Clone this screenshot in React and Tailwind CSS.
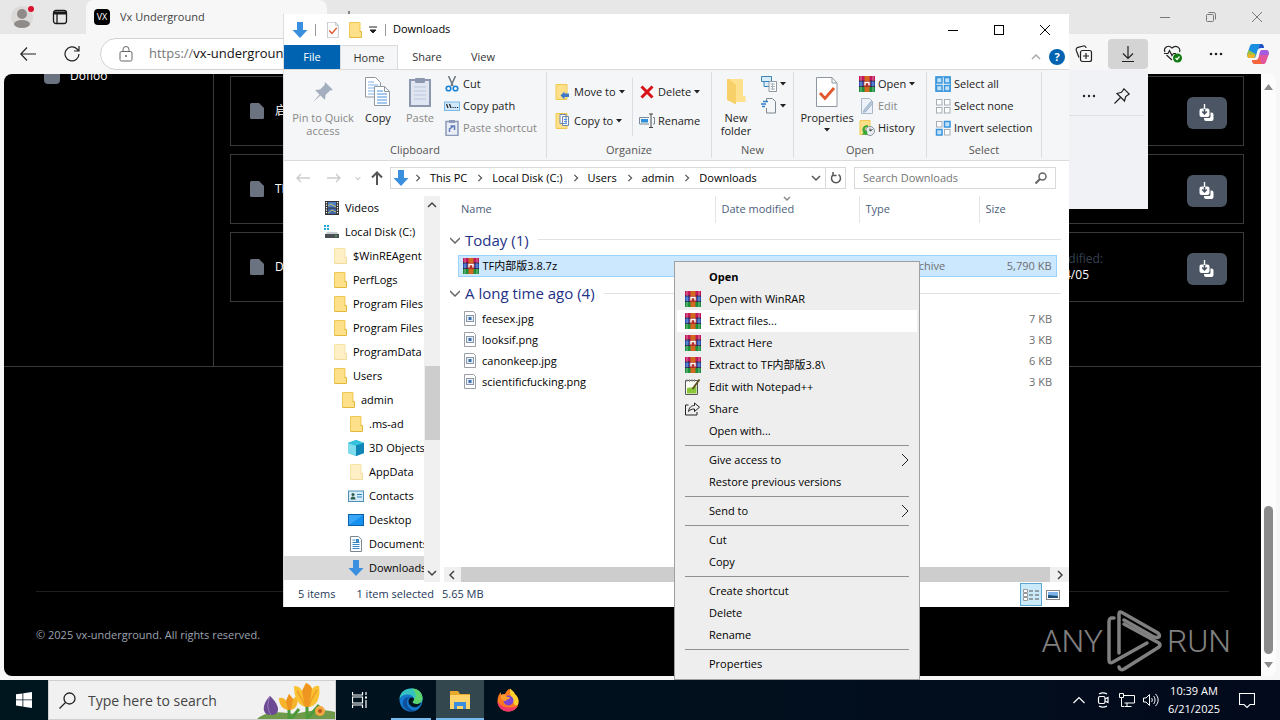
import React, { useState } from 'react';
import clsx from 'clsx';

/* ---------- small icons ---------- */

const WinRar = () => (
  <svg viewBox="0 0 16 16" className="size-4 shrink-0">
    <rect width="16" height="5" y="0" fill="#c2185b" />
    <rect width="16" height="5" y="5" fill="#2f4fb5" />
    <rect width="16" height="6" y="10" fill="#1b8f3c" />
    <path d="M0 5h16M0 10.500h16" stroke="#2a2140" strokeWidth="1" />
    <path d="M2 0v5M2 11v5M14 0v5M14 11v5" stroke="#fff" strokeOpacity=".45" />
    <path d="M2 5.500v5M14 5.500v5" stroke="#9fe0f5" strokeOpacity=".7" />
    <rect x="5.500" width="5" height="16" fill="#d2691e" />
    <rect x="4.500" y="5" width="7" height="6" rx="1" fill="#b0302a" />
    <path d="M6 9.500V6.500h4v3" fill="none" stroke="#fff" strokeWidth="1.400" />
  </svg>
);

const Folder = ({ pale }) => (
  <svg viewBox="0 0 16 16" className={clsx('size-4 shrink-0', pale && 'opacity-50')}>
    <path d="M2.500.5H13v14.500H2.500z" fill="#ffe08a" stroke="#efc850" />
    <path d="M12.500 9.500h2V15.500H2.500" fill="#ffe08a" stroke="#e5b93c" />
  </svg>
);

const DownArrow = () => (
  <svg viewBox="0 0 16 16" className="size-4 shrink-0">
    <path d="M5 0h6v8h4.500L8 16 .5 8H5z" fill="#3a8fde" />
  </svg>
);

const Caret = () => (
  <svg viewBox="0 0 6 4" className="h-1 w-1.5 shrink-0">
    <path d="M0 0h6L3 3.500z" fill="#222" />
  </svg>
);

const Chevron = ({ className, d = 'M3 1l4 4-4 4' }) => (
  <svg viewBox="0 0 10 10" className={clsx('shrink-0', className || 'size-2.5')}>
    <path d={d} fill="none" stroke="currentColor" strokeWidth="1.500" />
  </svg>
);

const Drive = () => (
  <svg viewBox="0 0 16 16" className="size-4 shrink-0">
    <path d="M0 1h2v2H0zM3 1h2v2H3zM0 4h2v2H0zM3 4h2v2H3z" fill="#1eaadf" />
    <path d="M3 8h10l2 3H1z" fill="#c9cdd1" />
    <rect x="1" y="10" width="14" height="4" fill="#4a4f54" />
    <rect x="11" y="11.500" width="2" height="1" fill="#50d060" />
  </svg>
);

const Videos = () => (
  <svg viewBox="0 0 16 16" className="size-4 shrink-0">
    <rect x="1" y="1" width="14" height="14" fill="#333" />
    <rect x="4" y="2" width="8" height="5.500" fill="#4f7fc4" />
    <rect x="4" y="8.500" width="8" height="5.500" fill="#3e68ab" />
    <path d="M4 6l3-2 5 3M4 13l4-3 4 2" stroke="#c8c06a" fill="none" />
    <path d="M2.500 2v12M13.500 2v12" stroke="#fff" strokeWidth="1.200" strokeDasharray="1.200 1.300" />
  </svg>
);

const Cube = () => (
  <svg viewBox="0 0 16 16" className="size-4 shrink-0">
    <path d="M0 3l8-3 8 3v10l-8 3-8-3z" fill="#1aa6c8" />
    <path d="M0 3l8 2.500V16l-8-3z" fill="#7fdcec" />
    <path d="M0 3l8-3 8 3-8 2.500z" fill="#35c2dc" />
    <path d="M8 5.500L16 3v10l-8 3z" fill="#0f86b5" />
  </svg>
);

const Contacts = () => (
  <svg viewBox="0 0 16 16" className="size-4 shrink-0">
    <rect x=".5" y="3" width="15" height="10.500" fill="#d7ecf8" stroke="#4f8fb8" />
    <circle cx="5" cy="6.500" r="1.500" fill="#2f5d50" />
    <path d="M2.500 11.500c0-4 5-4 5 0z" fill="#2f5d50" />
    <path d="M9 6.500h5M9 9h5" stroke="#2f84c4" />
  </svg>
);

const Desktop = () => (
  <svg viewBox="0 0 16 16" className="size-4 shrink-0">
    <rect x=".5" y="2.500" width="15" height="11" fill="#1590ef" stroke="#0b5fa8" />
    <path d="M1 13V3h14z" fill="#39a6f8" />
  </svg>
);

const Doc = () => (
  <svg viewBox="0 0 16 16" className="size-4 shrink-0">
    <path d="M2.500.5h8l3 3v12h-11z" fill="#fff" stroke="#7d8790" />
    <path d="M4.500 4h3M4.500 6.500h7M4.500 8.500h7M4.500 10.500h7M4.500 12.500h7" stroke="#3b87c8" />
    <rect x="8" y="3" width="3" height="3" fill="#3b87c8" />
  </svg>
);

const ImageFile = () => (
  <svg viewBox="0 0 16 16" className="size-4 shrink-0">
    <path d="M2.500.5h9l2 2v12h-11z" fill="#fff" stroke="#9aa0a6" />
    <rect x="4.500" y="4.500" width="7" height="6" fill="#e6eef8" stroke="#8a97a8" />
    <rect x="6.500" y="6" width="3" height="3" fill="#3d6fae" />
  </svg>
);

const Notepad = () => (
  <svg viewBox="0 0 16 16" className="size-4 shrink-0">
    <path d="M.5 1.500h12v14H.5z" fill="#fbfdf4" stroke="#555" />
    <path d="M2 9c4-1 7 0 9.500-2v7.500H2z" fill="#8bc53a" />
    <path d="M7.500 10L14.500.5" stroke="#5b4a1d" strokeWidth="1.800" />
    <path d="M2 0v3M4.500 0v3M7 0v3M9.500 0v3" stroke="#999" />
  </svg>
);

const ShareIcon = () => (
  <svg viewBox="0 0 16 16" className="size-4 shrink-0" fill="none" stroke="#222">
    <path d="M3.500 4H.5v10h11.500v-3" />
    <path d="M3.500 10.500c.5-4 3-6 6-6V2l5 4.200-5 4.300V8c-3 0-4.500.8-6 2.500z" />
  </svg>
);

const CheckDoc = ({ className }) => (
  <svg viewBox="0 0 22 30" className={clsx('shrink-0', className)}>
    <path d="M.5.5h15.500l5 5.500v23.500H.5z" fill="#fff" stroke="#8d98a3" />
    <path d="M16 .5V6h5" fill="none" stroke="#8d98a3" />
    <path d="M4 16l5 5.500L18 11" fill="none" stroke="#e2572b" strokeWidth="2.800" />
  </svg>
);

const PinBig = () => (
  <svg viewBox="0 0 24 24" className="size-6">
    <path d="M14 2l8 8-3 .5-4.500 4.500-.500 5-4.500-4.500L2 22l6.500-7.500L4 10l5-.5L13.500 5z" fill="#a3afbf" />
  </svg>
);

const CopyBig = () => (
  <svg viewBox="0 0 26 30" className="h-[30px] w-[26px]">
    <path d="M.5.5h10l5 5V20H.5z" fill="#fff" stroke="#8d98a3" />
    <path d="M3 5h6M3 8h10M3 11h10M3 14h10M3 17h10" stroke="#7fb0e8" />
    <path d="M9.500 9.500h10l5 5v14h-15z" fill="#fff" stroke="#8d98a3" />
    <path d="M19.500 9.500v5h5" fill="none" stroke="#8d98a3" />
    <path d="M12 14h6M12 17h10M12 20h10M12 23h10M12 26h10" stroke="#4a90e2" />
  </svg>
);

const PasteBig = () => (
  <svg viewBox="0 0 22 30" className="h-[30px] w-[22px]">
    <rect x="1" y="3" width="20" height="26" fill="#dfe6f2" stroke="#8b98b0" strokeWidth="2" />
    <rect x="6" y="1" width="10" height="5" rx="1" fill="#8b98b0" />
    <path d="M5 10h12M5 14h12M5 18h12M5 22h12" stroke="#b9c6dc" />
  </svg>
);

const FolderBig = () => (
  <svg viewBox="0 0 20 28" className="h-[30px] w-5">
    <path d="M2 1h15v17h2.500v6H9V9z" fill="#ffe08c" />
    <path d="M1 1h2l7 6v19.500L1 22z" fill="#f7d06a" />
  </svg>
);

const Scissors = () => (
  <svg viewBox="0 0 16 16" className="size-4 shrink-0" fill="none">
    <path d="M4.500 0L9 10M11.500 0L7 10" stroke="#6c757d" strokeWidth="1.500" />
    <circle cx="4.500" cy="12.500" r="2.300" stroke="#1883d7" strokeWidth="1.600" />
    <circle cx="11.500" cy="12.500" r="2.300" stroke="#1883d7" strokeWidth="1.600" />
  </svg>
);

const CopyPath = () => (
  <svg viewBox="0 0 16 16" className="size-4 shrink-0">
    <rect x=".5" y="4" width="15" height="8.500" fill="#cfe8fb" stroke="#7bb7e6" />
    <path d="M2.500 6l1.500 4M5.500 6l1.500 4" stroke="#222" strokeWidth="1.200" />
    <path d="M8.500 9.500h1.200M10.700 9.500h1.200M12.900 9.500h1.200" stroke="#222" />
  </svg>
);

const PasteShortcut = () => (
  <svg viewBox="0 0 16 16" className="size-4 shrink-0">
    <rect x="2" y="1.500" width="12" height="14" fill="#e8edf6" stroke="#8b98b8" strokeWidth="1.500" />
    <rect x="5" y="0" width="6" height="3" fill="#8b98b8" />
    <path d="M5.500 12V9l3.500-2.500M6.500 6h4v4" fill="none" stroke="#5f7bb5" strokeWidth="1.500" />
  </svg>
);

const MoveTo = () => (
  <svg viewBox="0 0 16 16" className="size-4 shrink-0">
    <path d="M1 .5h11V15.500H1z" fill="#ffe08a" stroke="#efc850" />
    <path d="M14 9.500v3.500H9.500v2.500L5.500 11.500l4-4v2z" fill="#3e78c8" />
  </svg>
);

const CopyTo = () => (
  <svg viewBox="0 0 16 16" className="size-4 shrink-0">
    <path d="M1 .5h11V15.500H1z" fill="#ffe08a" stroke="#efc850" />
    <path d="M5 1.500h6v9H5zM7.500 3.500h6v9h-6z" fill="#fff" stroke="#6e86a8" />
    <path d="M9 6.500h3M9 8.500h3M9 10.500h3" stroke="#4a90e2" />
  </svg>
);

const DeleteX = () => (
  <svg viewBox="0 0 16 16" className="size-4 shrink-0">
    <path d="M2.500 2.500l11 11M13.500 2.500l-11 11" stroke="#d8141a" strokeWidth="3" />
  </svg>
);

const RenameIcon = () => (
  <svg viewBox="0 0 16 16" className="size-4 shrink-0" fill="none">
    <path d="M10 4.500H.5v6.500H10M14 4.500h1.500v6.500H14" stroke="#7b8a99" />
    <rect x="2" y="6" width="7" height="3.500" fill="#2f8fd8" />
    <path d="M10 1h4M12 1v13.500M10 14.500h4" stroke="#444" />
  </svg>
);

const NewItem = () => (
  <svg viewBox="0 0 16 16" className="size-4 shrink-0">
    <path d="M.5.5h10v5H.5zM3 5.500h6v5H3z" fill="#d8ecfa" stroke="#3c83b8" />
    <path d="M8 5.500h7.500v10H8z" fill="#fff" stroke="#8d98a3" />
    <path d="M9.500 8h4.500M9.500 10.500h4.500M9.500 13h4.500M11.500 7v7" stroke="#a8b2bc" />
  </svg>
);

const EasyAccess = () => (
  <svg viewBox="0 0 16 16" className="size-4 shrink-0" fill="none">
    <path d="M5.500 3V.5h6l3 3v11.500h-9V10" stroke="#7d8790" />
    <path d="M2 3.500h5M0 6h5M1 8.500h3" stroke="#2f7fc8" strokeWidth="1.400" />
  </svg>
);

const EditIcon = () => (
  <svg viewBox="0 0 16 16" className="size-4 shrink-0">
    <path d="M2.500.5h8l3 3v12h-11z" fill="#edf2f8" stroke="#a9b7c8" />
    <path d="M5 12l7-8.500 2 1.500-7 8.500-2.500.8z" fill="#b9cadd" stroke="#9bb0c8" />
  </svg>
);

const HistoryIcon = () => (
  <svg viewBox="0 0 16 16" className="size-4 shrink-0">
    <path d="M1 .5h10V14.500H1z" fill="#ffe08a" stroke="#efc850" />
    <circle cx="11" cy="11" r="4.500" fill="#e8edf1" stroke="#8b949c" />
    <path d="M11 8.500V11l2.500-1.500" stroke="#333" fill="none" />
    <path d="M9 5c-5 0-7 4-4.500 8l-2 1.500 6 .5-.5-5-1.500 1C5 9 6 7 9 7z" fill="#38a838" />
  </svg>
);

const SelectGrid = ({ filled }) => (
  <svg viewBox="0 0 16 16" className="size-4 shrink-0">
    {[[1, 1], [9, 1], [1, 9], [9, 9]].map(([x, y], i) => (
      <rect
        key={i}
        x={x + 0.5}
        y={y + 0.5}
        width="5.500"
        height="5.500"
        fill={filled.includes(i) ? '#bfe1fa' : '#fff'}
        stroke={filled.includes(i) ? '#3a96dd' : '#a5adb5'}
        strokeWidth={filled.includes(i) ? 1.5 : 1}
      />
    ))}
    {filled.length === 4 && <rect x=".7" y=".7" width="14.600" height="14.600" fill="none" stroke="#3a96dd" />}
  </svg>
);

/* ---------- browser behind the windows ---------- */

function DownloadGlyph() {
  return (
    <svg viewBox="0 0 16 18" className="h-[18px] w-4">
      <path d="M5 14v1a2 2 0 002 2h5.500a2 2 0 002-2v-4.500a2 2 0 00-2-2h-1v4a1.500 1.500 0 01-1.500 1.500z" fill="#fff" />
      <path d="M2.500 4.500h6a2 2 0 012 2V11a2 2 0 01-2 2h-6a2 2 0 01-2-2V6.500a2 2 0 012-2z" fill="#fff" />
      <path d="M5.500 4.500V9.500M3.200 7.500l2.300 2.300 2.300-2.300" fill="none" stroke="#4b5563" strokeWidth="1.600" />
      <path d="M5.500 0v5" stroke="#fff" strokeWidth="1.400" />
    </svg>
  );
}

const samples = ['启', 'TFA', 'DDoS'];

function BrowserTitleBar() {
  return (
    <div className="flex h-[34px] bg-[#e7e7e7] text-[11px] text-[#444]">
      <button aria-label="Profile" className="ml-2 flex w-[30px] items-center justify-center">
        <svg viewBox="0 0 28 28" className="size-7">
          <circle cx="13" cy="14" r="11" fill="#dcdad8" />
          <circle cx="13" cy="11" r="5" fill="#8f8b88" />
          <ellipse cx="13" cy="21" rx="8" ry="4" fill="#8f8b88" />
          <circle cx="22" cy="6" r="3" fill="#d9102c" />
        </svg>
      </button>
      <button aria-label="Tab actions" className="flex w-11 items-center justify-center">
        <svg viewBox="0 0 16 16" className="size-4" fill="none" stroke="#1a1a1a" strokeWidth="1.300">
          <rect x="1.500" y="1.500" width="13" height="13" rx="2.500" />
          <path d="M1.500 4h13" strokeWidth="3" />
          <path d="M5 5v9" />
        </svg>
      </button>
      <div className="ml-1 flex w-[241px] items-center gap-2.5 rounded-t-lg bg-[#f7f7f7] pl-2">
        <span className="flex size-4 items-center justify-center rounded-sm bg-black text-[9px] text-white">VX</span>
        <span>Vx Underground</span>
      </div>
      <button aria-label="New tab" className="w-11">
        <svg viewBox="0 0 12 12" className="mx-auto size-3" stroke="#222"><path d="M6 0v12M0 6h12" /></svg>
      </button>
      <div className="ml-auto flex text-[#777]">
        <button aria-label="Minimize" className="w-[46px]">
          <svg viewBox="0 0 10 10" className="mx-auto size-2.5" stroke="currentColor"><path d="M0 5.500h10" /></svg>
        </button>
        <button aria-label="Restore" className="w-[46px]">
          <svg viewBox="0 0 10 10" className="mx-auto size-2.5" fill="none" stroke="currentColor">
            <rect x=".5" y="2.500" width="7" height="7" rx="1" /><path d="M2.500.5h5a2 2 0 012 2v5" />
          </svg>
        </button>
        <button aria-label="Close" className="w-[46px]">
          <svg viewBox="0 0 10 10" className="mx-auto size-2.5" stroke="currentColor"><path d="M0 0l10 10M10 0L0 10" /></svg>
        </button>
      </div>
    </div>
  );
}

function BrowserToolbar() {
  return (
    <div className="flex h-10 items-center bg-[#f7f7f7] pr-1">
      <button aria-label="Back" className="ml-2 flex w-10 justify-center">
        <svg viewBox="0 0 16 14" className="h-3.5 w-4" fill="none" stroke="#222" strokeWidth="1.200"><path d="M16 7H1M7 .5L.8 7 7 13.500" /></svg>
      </button>
      <button aria-label="Refresh" className="ml-1 flex w-10 justify-center">
        <svg viewBox="0 0 16 16" className="size-4" fill="none" stroke="#222" strokeWidth="1.200">
          <path d="M15 8a7 7 0 11-2-5l2 2M15 0v5h-5" />
        </svg>
      </button>
      <label className="ml-2 flex h-8 min-w-0 flex-1 items-center rounded-full border border-[#d2d2d2] bg-white pl-[18px] text-[13px]">
        <svg viewBox="0 0 14 16" className="mr-4 h-4 w-3.5 shrink-0" fill="none" stroke="#666">
          <rect x="1" y="5.500" width="12" height="9.500" rx="1.500" /><path d="M4 5.500V3.500a3 3 0 016 0v2" /><circle cx="7" cy="10" r=".6" fill="#666" />
        </svg>
        <span className="text-[#777]">https://</span>
        <input aria-label="Address" className="min-w-0 flex-1 bg-transparent text-[#111] outline-none" defaultValue="vx-underground.org" />
      </label>
      <button aria-label="Collections" className="ml-2 flex w-8 justify-center">
        <svg viewBox="0 0 18 18" className="size-[18px]" fill="none" stroke="#222" strokeWidth="1.200">
          <rect x="5.500" y="5.500" width="11" height="11" rx="2" /><path d="M11 8v6M8 11h6M4 12.500L1.300 5.500A2.500 2.500 0 013 2.300L8.500 1a2 2 0 012.500 2" />
        </svg>
      </button>
      <button aria-label="Downloads" className="ml-2 flex h-[30px] w-10 items-center justify-center rounded bg-[#d4d4d4]">
        <svg viewBox="0 0 14 16" className="h-4 w-3.5" fill="none" stroke="#222" strokeWidth="1.200"><path d="M7 0v12M2 7.500l5 5 5-5M1 15.500h12" /></svg>
      </button>
      <button aria-label="Browser essentials" className="ml-[5px] flex w-10 justify-center">
        <svg viewBox="0 0 20 18" className="h-[18px] w-5" fill="none" stroke="#222" strokeWidth="1.200">
          <path d="M2 7C0 3 5-1 9 3c4-4 9 0 7.500 4M3.500 10L9 15M1 8.500h4l1.500-3 2.500 5 1.500-2H13" />
          <circle cx="14.500" cy="13" r="4.500" fill="#107c10" stroke="none" /><path d="M12.500 13l1.500 1.500 2.500-3" stroke="#fff" />
        </svg>
      </button>
      <button aria-label="Settings and more" className="ml-[3px] flex w-10 justify-center">
        <svg viewBox="0 0 14 4" className="h-1 w-3.5" fill="#222"><circle cx="2" cy="2" r="1.300" /><circle cx="7" cy="2" r="1.300" /><circle cx="12" cy="2" r="1.300" /></svg>
      </button>
      <button aria-label="Copilot" className="ml-1 flex w-9 justify-center">
        <svg viewBox="0 0 22 20" className="h-5 w-[22px]">
          <path d="M6 0h8c2 0 2.500 1.500 3 4h-4c-2 0-2.500 2-3.500 6S8 14 5 14H3c-3 0-3-3-2.500-5L3 2c.5-1.500 1.500-2 3-2z" fill="#1b8fe0" />
          <path d="M1.500 6l-1 4c-.5 3 .5 4 2.500 4h2c2 0 3-1 3.500-4z" fill="#9bc53f" />
          <path d="M.5 10c-.5 3 .5 4 2.500 4h2c2 0 3-1 3.500-3z" fill="#f0b323" />
          <path d="M13 0h1c2 0 2.500 1.500 3 4h-4l-1.500 1z" fill="#2650c8" />
          <path d="M16 20H8c-2 0-2.500-1.500-3-4h4c2 0 2.500-2 3.500-6S14 6 17 6h2c3 0 3 3 2.500 5L19 18c-.5 1.500-1.500 2-3 2z" fill="#e0559b" />
          <path d="M13 7.500C14 6 15 6 17 6h2c3 0 3 3 2.500 5h-9z" fill="#a35be0" />
          <path d="M5 16h4c2 0 3-1 3.500-3l2 7H8c-2 0-2.500-1.500-3-4z" fill="#f4653a" />
        </svg>
      </button>
    </div>
  );
}

function WebPage() {
  return (
    <div className="flex min-h-0 flex-1 bg-[#f7f7f7] px-1 pb-1">
      <main className="flex min-w-0 flex-1 flex-col overflow-hidden rounded-l-lg bg-black">
        <div className="flex h-[293px] shrink-0 border-b border-[#3a3a3a]">
          <aside className="w-[210px] shrink-0 border-r border-[#3a3a3a] pl-10">
            <a href="#dofloo" className="-mt-2 flex items-center gap-2.5 text-[12px] leading-5 text-white">
              <span className="h-4 w-4 rounded-sm bg-[#6b7280]" />
              Dofloo
            </a>
          </aside>
          <div className="flex flex-1 flex-col gap-2 pt-0.5 pr-[17px] pl-4">
            {samples.map((name) => (
              <div key={name} className="flex h-[70px] items-center border border-[#3a3a3a] pr-4 pl-[19px] text-[12px] text-white">
                <svg viewBox="0 0 14 16" className="mr-[11px] h-4 w-3.5"><path d="M0 1.500Q0 0 1.500 0H9l5 5v9.500q0 1.500-1.500 1.500h-11Q0 16 0 14.500z" fill="#6b7280" /></svg>
                <span>{name}</span>
                <div className="mr-[84px] ml-auto flex flex-col items-end leading-4">
                  <span className="text-[#374151]">Modified:</span>
                  <span className="mr-3.5">2024/04/05</span>
                </div>
                <button aria-label={`Download ${name}`} className="mt-1 flex h-8 w-10 items-center justify-center rounded-md bg-[#4b5563]">
                  <DownloadGlyph />
                </button>
              </div>
            ))}
          </div>
        </div>
        <footer className="mx-8 mt-auto h-[85px] border-t border-[#1f1f1f] pt-[35px] text-[11px] leading-4 text-[#9ca3af]">
          © 2025 vx-underground. All rights reserved.
        </footer>
      </main>
      <div className="flex w-[15px] flex-col items-center rounded-r-lg bg-[#fcfcfc] pt-2.5 pb-2">
        <svg viewBox="0 0 9 6" className="h-1.5 w-[9px]"><path d="M0 6l4.500-6L9 6z" fill="#8b8b8b" /></svg>
        <div className="mt-auto mb-2 h-[148px] w-[9px] rounded-full bg-[#8b8b8b]" />
        <svg viewBox="0 0 9 6" className="h-1.5 w-[9px]"><path d="M0 0l4.500 6L9 0z" fill="#8b8b8b" /></svg>
      </div>
    </div>
  );
}

function DownloadsFlyout() {
  return (
    <div className="absolute top-[70px] right-[132px] h-[139px] w-[360px] bg-[#f0f2f5] shadow-md">
      <div className="mr-1 flex h-[46px] items-center justify-end gap-[18px] border-b border-[#dfe1e4] pt-1.5 pr-[14px]">
        <button aria-label="More options">
          <svg viewBox="0 0 14 4" className="h-1 w-3.5" fill="#222"><circle cx="2" cy="2" r="1.200" /><circle cx="7" cy="2" r="1.200" /><circle cx="12" cy="2" r="1.200" /></svg>
        </button>
        <button aria-label="Pin downloads">
          <svg viewBox="0 0 16 16" className="size-4" fill="none" stroke="#222" strokeWidth="1.200">
            <path d="M10 .8l5.200 5.200-3.500 2.500-1.200 4.500-7.500-7.500 4.500-1.200zM6.500 9.500L.5 15.500" />
          </svg>
        </button>
      </div>
    </div>
  );
}

/* ---------- file explorer ---------- */

const RibbonGroup = ({ label, className, children }) => (
  <div className={clsx('my-0.5 flex shrink-0 flex-col border-r border-[#dcdde0]', className)}>
    <div className="flex h-[71px]">{children}</div>
    <div className="text-center leading-4 text-[#555]">{label}</div>
  </div>
);

const BigButton = ({ icon, className, children }) => (
  <button className={clsx('flex shrink-0 flex-col items-center pt-1 leading-[13px]', className)}>
    <span className="mb-[3px] flex h-8 items-center">{icon}</span>
    {children}
  </button>
);

const SmallButton = ({ icon, caret, muted, children }) => (
  <button className={clsx('flex h-[22px] items-center gap-[3px] whitespace-nowrap', muted && 'text-[#888]')}>
    {icon}
    {children}
    {caret && <Caret />}
  </button>
);

function Ribbon() {
  return (
    <div className="flex h-[92px] shrink-0 border-y border-[#dadbdc] bg-[#f5f6f7] text-[11px] text-[#222]">
      <RibbonGroup label="Clipboard" className="w-[263px]">
        <BigButton icon={<PinBig />} className="ml-1 w-[70px] text-[#888]">
          <span>Pin to Quick</span>
          <span>access</span>
        </BigButton>
        <BigButton icon={<CopyBig />} className="w-10">Copy</BigButton>
        <BigButton icon={<PasteBig />} className="w-[44px] text-[#888]">Paste</BigButton>
        <div className="ml-0.5 flex flex-col pt-px">
          <SmallButton icon={<Scissors />}>Cut</SmallButton>
          <SmallButton icon={<CopyPath />}>Copy path</SmallButton>
          <SmallButton icon={<PasteShortcut />} muted>Paste shortcut</SmallButton>
        </div>
      </RibbonGroup>
      <RibbonGroup label="Organize" className="w-[165px]">
        <div className="my-1.5 flex w-[86px] flex-col gap-[7px] border-r border-[#dcdde0] pt-[3px] pl-2">
          <SmallButton icon={<MoveTo />} caret>Move to</SmallButton>
          <SmallButton icon={<CopyTo />} caret>Copy to</SmallButton>
        </div>
        <div className="my-1.5 flex flex-col gap-[7px] pt-[3px] pl-1.5">
          <SmallButton icon={<DeleteX />} caret>Delete</SmallButton>
          <SmallButton icon={<RenameIcon />}>Rename</SmallButton>
        </div>
      </RibbonGroup>
      <RibbonGroup label="New" className="w-[82px]">
        <BigButton icon={<FolderBig />} className="ml-[3px] w-[42px]">
          <span>New</span>
          <span>folder</span>
        </BigButton>
        <div className="ml-1 flex flex-col pt-px">
          <SmallButton icon={<NewItem />} caret />
          <SmallButton icon={<EasyAccess />} caret />
        </div>
      </RibbonGroup>
      <RibbonGroup label="Open" className="w-[133px]">
        <BigButton icon={<CheckDoc className="h-[30px] w-[22px]" />} className="ml-[5px] w-[56px]">
          <span>Properties</span>
          <span className="flex h-3 items-center"><Caret /></span>
        </BigButton>
        <div className="ml-1 flex flex-col pt-px">
          <SmallButton icon={<WinRar />} caret>Open</SmallButton>
          <SmallButton icon={<EditIcon />} muted>Edit</SmallButton>
          <SmallButton icon={<HistoryIcon />}>History</SmallButton>
        </div>
      </RibbonGroup>
      <RibbonGroup label="Select" className="w-[115px]">
        <div className="ml-2 flex flex-col pt-px">
          <SmallButton icon={<SelectGrid filled={[0, 1, 2, 3]} />}>Select all</SmallButton>
          <SmallButton icon={<SelectGrid filled={[]} />}>Select none</SmallButton>
          <SmallButton icon={<SelectGrid filled={[1, 2]} />}>Invert selection</SmallButton>
        </div>
      </RibbonGroup>
    </div>
  );
}

const crumbs = ['This PC', 'Local Disk (C:)', 'Users', 'admin', 'Downloads'];

function AddressRow() {
  return (
    <div className="flex h-[34px] shrink-0 items-center pr-[13px] pl-3">
      <div className="flex w-[94px] items-center gap-[15px] text-[#ccc]">
        <button aria-label="Back" className="w-4">
          <svg viewBox="0 0 14 10" className="h-2.5 w-3.5" fill="none" stroke="currentColor" strokeWidth="1.400"><path d="M14 5H1M5 1L1 5l4 4" /></svg>
        </button>
        <button aria-label="Forward" className="w-4">
          <svg viewBox="0 0 14 10" className="h-2.5 w-3.5" fill="none" stroke="currentColor" strokeWidth="1.400"><path d="M0 5h13M9 1l4 4-4 4" /></svg>
        </button>
        <Chevron d="M2 4l3 3 3-3" className="-mx-1 size-2" />
        <button aria-label="Up" className="-ml-0.5 text-[#555]">
          <svg viewBox="0 0 12 14" className="h-3.5 w-3" fill="none" stroke="currentColor" strokeWidth="2"><path d="M6 14V2M1 6.500l5-5 5 5" /></svg>
        </button>
      </div>
      <div className="flex h-[22px] flex-1 items-center border border-[#d9d9d9] pl-0.5">
        <DownArrow />
        {crumbs.map((c) => (
          <React.Fragment key={c}>
            <Chevron className="mr-2 ml-[5px] size-2 text-[#555]" />
            <button className="mr-1 text-[11px]">{c}</button>
          </React.Fragment>
        ))}
        <Chevron d="M1 3l4 4 4-4" className="mr-1 ml-auto size-2.5 text-[#555]" />
        <button aria-label="Refresh" className="flex h-full w-5 items-center justify-center border-l border-[#d9d9d9] text-[#555]">
          <svg viewBox="0 0 12 12" className="size-3" fill="none" stroke="currentColor" strokeWidth="1.500"><path d="M8.500 2.500a4.500 4.500 0 11-5 0M3 0v3.500h3.500" /></svg>
        </button>
      </div>
      <label className="ml-2 flex h-[22px] w-[202px] items-center border border-[#d9d9d9] px-2 text-[11px]">
        <input placeholder="Search Downloads" aria-label="Search Downloads" className="min-w-0 flex-1 outline-none placeholder:text-[#757575]" />
        <svg viewBox="0 0 12 12" className="size-3" fill="none" stroke="#666" strokeWidth="1.500"><circle cx="7.500" cy="4.500" r="3.500" /><path d="M5 7L.5 11.500" strokeWidth="2" /></svg>
      </label>
    </div>
  );
}

const tree = [
  { name: 'Videos', icon: <Videos />, pad: 'pl-10' },
  { name: 'Local Disk (C:)', icon: <Drive />, pad: 'pl-10' },
  { name: '$WinREAgent', icon: <Folder pale />, pad: 'pl-12' },
  { name: 'PerfLogs', icon: <Folder />, pad: 'pl-12' },
  { name: 'Program Files', icon: <Folder />, pad: 'pl-12' },
  { name: 'Program Files ', icon: <Folder />, pad: 'pl-12' },
  { name: 'ProgramData', icon: <Folder pale />, pad: 'pl-12' },
  { name: 'Users', icon: <Folder />, pad: 'pl-12' },
  { name: 'admin', icon: <Folder />, pad: 'pl-14' },
  { name: '.ms-ad', icon: <Folder />, pad: 'pl-16' },
  { name: '3D Objects', icon: <Cube />, pad: 'pl-16' },
  { name: 'AppData', icon: <Folder pale />, pad: 'pl-16' },
  { name: 'Contacts', icon: <Contacts />, pad: 'pl-16' },
  { name: 'Desktop', icon: <Desktop />, pad: 'pl-16' },
  { name: 'Documents', icon: <Doc />, pad: 'pl-16' },
  { name: 'Downloads', icon: <DownArrow />, pad: 'pl-16' },
];

function NavTree() {
  return (
    <div className="flex w-[156px] shrink-0">
      <ul className="min-w-0 flex-1 overflow-hidden">
        {tree.map((t) => (
          <li key={t.name}>
            <button
              className={clsx(
                'flex h-6 w-full items-center gap-[5px] overflow-hidden whitespace-nowrap',
                t.pad,
                t.name === 'Downloads' && 'bg-[#d9d9d9]'
              )}
            >
              {t.icon}
              {t.name}
            </button>
          </li>
        ))}
      </ul>
      <div className="flex w-4 shrink-0 flex-col items-center bg-[#f0f0f0] py-1 text-[#444]">
        <Chevron d="M1 7l4-4 4 4" />
        <div className="mt-auto mb-32 h-[74px] w-[15px] bg-[#cdcdcd]" />
        <Chevron d="M1 3l4 4 4-4" />
      </div>
    </div>
  );
}

const groups = [
  {
    title: 'Today (1)',
    files: [{ name: 'TF内部版3.8.7z', icon: <WinRar />, type: 'WinRAR archive', size: '5,790 KB' }],
  },
  {
    title: 'A long time ago (4)',
    files: [
      { name: 'feesex.jpg', icon: <ImageFile />, type: 'JPG File', size: '7 KB' },
      { name: 'looksif.png', icon: <ImageFile />, type: 'PNG File', size: '3 KB' },
      { name: 'canonkeep.jpg', icon: <ImageFile />, type: 'JPG File', size: '6 KB' },
      { name: 'scientificfucking.png', icon: <ImageFile />, type: 'PNG File', size: '3 KB' },
    ],
  },
];

function FileList({ selected, onSelect }) {
  return (
    <div className="ml-1 flex min-w-0 flex-1 flex-col">
      <table className="w-full table-fixed border-collapse">
        <colgroup>
          <col className="w-[14px]" />
          <col />
          <col className="w-36" />
          <col className="w-[120px]" />
          <col className="w-[77px]" />
          <col className="w-[13px]" />
        </colgroup>
        <thead>
          <tr className="h-[27px] text-left text-[#4c607a]">
            <th />
            <th className="border-r border-[#e5e5e5] pl-[3px] font-normal">Name</th>
            <th className="relative border-r border-[#e5e5e5] pl-1.5 font-normal">
              Date modified
              <Chevron d="M2 3l3 3 3-3" className="absolute top-[-2px] left-[66px] size-2.5 text-[#888]" />
            </th>
            <th className="border-r border-[#e5e5e5] pl-1.5 font-normal">Type</th>
            <th className="pl-1.5 font-normal">Size</th>
            <th />
          </tr>
        </thead>
        {groups.map((g) => (
          <tbody key={g.title}>
            <tr className="h-8">
              <th colSpan={6} className="pt-0.5 pr-2 pb-0 pl-1.5 font-normal">
                <span className="flex items-center gap-[5px] text-[15px] leading-5 text-[#1e3287]">
                  <Chevron d="M0 3l5 5 5-5" className="size-2.5 text-[#666]" />
                  {g.title}
                  <span className="ml-1 h-px flex-1 bg-[#e2e2e2]" />
                </span>
              </th>
            </tr>
            {g.files.map((f) => {
              const cell = f.name === selected && 'border-y border-[#99d1ff] bg-[#cce8ff]';
              return (
                <tr key={f.name} className="h-[21px] text-[#6d6d6d]" onClick={() => onSelect(f.name)}>
                  <td />
                  <td className={clsx('p-0 text-black', cell, cell && 'border-l')}>
                    <span className="flex h-5 items-center gap-1 pt-px pl-1">{f.icon}{f.name}</span>
                  </td>
                  <td className={clsx('p-0 pl-1.5', cell)} />
                  <td className={clsx('p-0 pt-px pl-1.5', cell)}>{f.type}</td>
                  <td className={clsx('p-0 pt-px pr-1 text-right', cell, cell && 'border-r')}>{f.size}</td>
                  <td />
                </tr>
              );
            })}
          </tbody>
        ))}
      </table>
      <div className="mt-auto flex h-[15px] items-center bg-[#f0f0f0] pr-1 pl-[3px] text-[#444]">
        <Chevron d="M7 1L3 5l4 4" />
        <div className="mr-[5px] ml-1 h-full flex-1 bg-[#cdcdcd]" />
        <Chevron />
      </div>
    </div>
  );
}

function Explorer() {
  const [selected, setSelected] = useState('TF内部版3.8.7z');
  return (
    <section className="absolute top-[14px] left-[283px] flex h-[593px] w-[786px] flex-col border-l border-[#ddd] bg-white text-[11px] text-black">
      <div className="flex h-[31px] shrink-0 items-center pr-px pl-2">
        <DownArrow />
        <span className="ml-[7px] h-3 w-px bg-[#999]" />
        <CheckDoc className="ml-[11px] h-4 w-3" />
        <span className="ml-2"><Folder /></span>
        <svg viewBox="0 0 8 8" className="ml-1.5 size-2"><path d="M0 1h8M1 4h6L4 7z" stroke="#222" fill="#222" /></svg>
        <span className="ml-2 h-3 w-px bg-[#999]" />
        <h1 className="ml-[7px]">Downloads</h1>
        <div className="ml-auto flex h-full">
          <button aria-label="Minimize window" className="w-[46px]">
            <svg viewBox="0 0 10 10" className="mx-auto size-2.5" stroke="#000"><path d="M0 5.500h10" /></svg>
          </button>
          <button aria-label="Maximize window" className="w-[46px]">
            <svg viewBox="0 0 10 10" className="mx-auto size-2.5" fill="none" stroke="#000"><rect x=".5" y=".5" width="9" height="9" /></svg>
          </button>
          <button aria-label="Close window" className="w-[46px]">
            <svg viewBox="0 0 10 10" className="mx-auto size-2.5" stroke="#000"><path d="M0 0l10 10M10 0L0 10" /></svg>
          </button>
        </div>
      </div>
      <nav className="flex h-6 shrink-0 text-[#333]">
        <button className="w-14 bg-[#0063b1] text-white">File</button>
        <button className="-mb-px w-[58px] border border-b-0 border-[#dadbdc] bg-[#f5f6f7]">Home</button>
        <button className="w-[58px]">Share</button>
        <button className="w-[54px]">View</button>
        <div className="ml-auto flex items-center gap-2 pr-1 text-[#aaa]">
          <Chevron d="M1 7l4-4 4 4" />
          <button aria-label="Help" className="flex size-4 items-center justify-center rounded-full bg-[#0063b1] font-bold text-white">?</button>
        </div>
      </nav>
      <Ribbon />
      <AddressRow />
      <div className="mt-px flex min-h-0 flex-1">
        <NavTree />
        <FileList selected={selected} onSelect={setSelected} />
      </div>
      <footer className="flex h-[25px] shrink-0 items-center pl-3.5 text-[#1e395b]">
        <span>5 items</span>
        <span className="ml-[21px]">1 item selected</span>
        <span className="ml-2">5.65 MB</span>
        <button aria-label="Details view" className="ml-auto flex h-[23px] w-[22px] items-center justify-center border border-[#5aa7d0] bg-[#cbeaf9]">
          <svg viewBox="0 0 16 12" className="h-3 w-4" fill="none">
            <path d="M.5.5h4v3h-4zM.5 4.500h4v3h-4zM.5 8.500h4v3h-4z" fill="#fff" stroke="#999" />
            <path d="M6 2h4M6 6h4M6 10h4M12 2h4M12 6h4M12 10h4" stroke="#555" />
          </svg>
        </button>
        <button aria-label="Thumbnail view" className="mr-[9px] ml-1">
          <svg viewBox="0 0 14 10" className="h-2.5 w-3.5">
            <rect x=".5" y=".5" width="13" height="9" fill="#fff" stroke="#888" />
            <rect x="2" y="2" width="10" height="6" fill="#7fb2e8" />
            <path d="M2 8V5l10 1v2z" fill="#1d4f74" />
          </svg>
        </button>
      </footer>
    </section>
  );
}

/* ---------- context menu ---------- */

const menu = [
  [
    { label: 'Open', bold: true },
    { label: 'Open with WinRAR', icon: <WinRar /> },
    { label: 'Extract files...', icon: <WinRar />, active: true },
    { label: 'Extract Here', icon: <WinRar /> },
    { label: 'Extract to TF内部版3.8\\', icon: <WinRar /> },
    { label: 'Edit with Notepad++', icon: <Notepad /> },
    { label: 'Share', icon: <ShareIcon /> },
    { label: 'Open with...' },
  ],
  [{ label: 'Give access to', sub: true }, { label: 'Restore previous versions' }],
  [{ label: 'Send to', sub: true }],
  [{ label: 'Cut' }, { label: 'Copy' }],
  [{ label: 'Create shortcut' }, { label: 'Delete' }, { label: 'Rename' }],
  [{ label: 'Properties' }],
];

function ContextMenu() {
  return (
    <div role="menu" className="absolute top-[261px] left-[674px] w-[246px] border border-[#a0a0a0] bg-[#eeeeee] px-0.5 py-1 text-[11px] text-black">
      {menu.map((section, i) => (
        <div key={i}>
          {i > 0 && <hr className="mx-2 my-[3px] border-[#919191]" />}
          {section.map((item) => (
            <button
              key={item.label}
              role="menuitem"
              className={clsx(
                'flex h-[22px] w-full items-center pr-2 pl-2',
                item.active && 'bg-white',
                item.bold && 'font-bold'
              )}
            >
              <span className="mr-2 w-4">{item.icon}</span>
              {item.label}
              {item.sub && (
                <svg viewBox="0 0 8 14" className="ml-auto h-3.5 w-2" fill="none" stroke="#222"><path d="M1 1l6 6-6 6" /></svg>
              )}
            </button>
          ))}
        </div>
      ))}
    </div>
  );
}

/* ---------- taskbar ---------- */

function Taskbar() {
  return (
    <div className="flex h-10 shrink-0 bg-linear-to-r from-[#00161f] to-[#020a1c] text-white">
      <button aria-label="Start" className="flex w-12 items-center justify-center">
        <svg viewBox="0 0 16 16" className="size-4" fill="#fff"><path d="M0 2.300l6.500-.9v6.100H0zM7.300 1.300L16 0v7.500H7.300zM0 8.300h6.500v6.200L0 13.600zM7.300 8.300H16V16l-8.700-1.300z" /></svg>
      </button>
      <label className="flex w-72 items-center border border-[#d0d0d0] bg-[#f1f1f1] pl-2.5">
        <svg viewBox="0 0 17 17" className="mr-3 size-[17px]" fill="none" stroke="#222" strokeWidth="1.300"><circle cx="10.500" cy="6.500" r="5.500" /><path d="M6.500 10.500L.5 16.500" /></svg>
        <input placeholder="Type here to search" aria-label="Search" className="min-w-0 flex-1 text-[14px] outline-none placeholder:text-[#444]" />
        <svg viewBox="0 0 78 38" className="h-[38px] w-[78px] shrink-0">
          <path d="M0 38c12-10 28-6 38-5 14-4 30-5 40-2v7z" fill="#6f9a4a" />
          <path d="M13 15c-8 8-9 19 1 19 10 0 9-10-1-19z" fill="#6b4a93" /><path d="M13 15c-3 8-3 13 1 19" stroke="#9a7bc0" fill="none" />
          <path d="M32 38V24M50 38V22M50 38l12-14M34 38l8-10" stroke="#4c9a3a" strokeWidth="3" />
          <path d="M22 17q5-1 7 3l3-7 4 5 4-3c2 6 0 14-8 14-6 0-10-5-10-12z" fill="#f6b42a" />
          <path d="M29 20l3-7 4 5-2 11h-3z" fill="#ef9320" />
          <path d="M37 5q6 0 8 5l4-8q5 2 6 6 3-4 7-3c2 11-2 21-11 21-10 0-14-10-14-21z" fill="#f9c233" />
          <path d="M45 10l4-8q5 2 6 6l-3 18h-4z" fill="#ee961f" />
          <path d="M40 10q4 6 8 15M60 9q-5 7-8 16" stroke="#ef9f24" strokeWidth="1.500" fill="none" />
          <circle cx="63" cy="30" r="5" fill="#f5a742" /><circle cx="63" cy="30" r="2" fill="#b8581b" />
        </svg>
      </label>
      <button aria-label="Task View" className="mr-[3px] flex w-12 items-center justify-center">
        <svg viewBox="0 0 16 16" className="size-4" fill="none" stroke="#fff" strokeWidth="1.200"><path d="M.5 0v3h10V0M.5 16v-3h10v3M.5 5h10v6H.5zM14 0v3M14 8v8" /><rect x="13" y="4.500" width="2" height="2" fill="#fff" stroke="none" /></svg>
      </button>
      <button aria-label="Microsoft Edge" className="mr-px flex w-12 flex-col items-center justify-between pt-2">
        <svg viewBox="0 0 24 24" className="size-6">
          <circle cx="12" cy="12" r="11.500" fill="#1478cc" />
          <path d="M.5 11C1 4 6 .5 12.500.5 19 .5 23.500 5 23.500 10c0 4-3 6-6 6-2 0-4-.8-4-2 0-1 1.500-1.500 1.500-3 0-2.500-3-4.500-6.500-4.500C4.500 6.500 1.500 8.500.5 11z" fill="#36c3c0" />
          <path d="M13 .5C19.500.5 23.500 5 23.500 10c0 4-3 6-6 6-2 0-4-.8-4-2 0-1 1.500-1.500 1.500-3C18 9 17 4 13 .5z" fill="#5bd66f" />
          <path d="M8 13c-1 5 3 10 9 9.500C9 25 4 20 4 15c0-4 3-6 7-6-2 1-3 2.500-3 4z" fill="#0d4f9c" />
          <path d="M15 11c0 2-1.500 2-1.500 3 0 1.200 2 2 4 2 1.500 0 3-.5 4-1.500.7 1-1 3.500-4 4.500-4 1-8-2-8-5.500 0-2 1-4 3-4 1.500 0 2.500.5 2.500 1.500z" fill="#00161f" />
        </svg>
        <span className="h-0.5 w-10 bg-[#76b9ed]" />
      </button>
      <button aria-label="File Explorer" className="flex w-12 flex-col items-center justify-between bg-[#33474f] pt-2">
        <svg viewBox="0 0 24 24" className="size-6">
          <path d="M2 3h8l2 3h10v4H2z" fill="#e8a92c" /><path d="M2 7h20v14H2z" fill="#ffd46b" />
          <path d="M6 14h12v7h-3v-3H9v3H6z" fill="#3b8ede" />
        </svg>
        <span className="h-0.5 w-full bg-[#76b9ed]" />
      </button>
      <button aria-label="Firefox" className="flex w-12 items-center justify-center">
        <svg viewBox="0 0 24 24" className="size-6">
          <path d="M13 1c3 1 4 3 5 5 4 2 5 6 4.500 9C22 20 17.500 23.500 12 23.500S1.500 19 1.500 13C1.500 9 3 6 5 4v3c2-1 3-1 4-1 1-2 2-4 4-5z" fill="#ff7a1f" />
          <path d="M14 .5c2 2 4 3 5 5.500 3.500 3 4 7 3 10-1 1.500-3 2-4 0-1-4-5-8-4-15.500z" fill="#ffcf2e" />
          <path d="M1.500 13c0 6 5 10.500 10.500 10.500 4 0 8-2 9.500-5.500-6 3-17 2-20-5z" fill="#f2356b" />
          <circle cx="12.500" cy="12.500" r="5" fill="#7a43d6" />
          <path d="M5 7c3-1 5 0 6 2 2 0 3 0 3 1-1 2-4 1-4 3-3 0-6-2-5-6z" fill="#ff9d2e" />
        </svg>
      </button>
      <div className="ml-auto flex items-center">
        <div className="flex items-center gap-2">
          <svg viewBox="0 0 16 16" className="size-4" fill="none" stroke="#fff" strokeWidth="1.200"><path d="M2.500 11L8 5.500l5.500 5.500" /></svg>
          <svg viewBox="0 0 16 16" className="size-4" fill="none" stroke="#fff" strokeWidth="1.200"><rect x="3.500" y="4.500" width="6.500" height="7" rx="1.500" /><path d="M10 7l3-1.500v5L10 9M4 2c2.500-1.500 5.500-1.500 8 0M4 14c2.500 1.500 5.500 1.500 8 0" /></svg>
          <svg viewBox="0 0 16 16" className="size-4" fill="none" stroke="#fff"><path d="M5 3.500h10.500v7.500H5.500M8 11v3M5.500 14.500h7M.5 1.500h4v4h-4zM2.500 5.500v9H5" /></svg>
          <svg viewBox="0 0 16 16" className="size-4" fill="none" stroke="#fff"><path d="M.5 6v4H3l3.500 3.500v-11L3 6zM8.500 6c1 1 1 3 0 4M10.500 4c2 2 2 6 0 8M12.500 2c3.500 3.500 3.500 8.500 0 12" /></svg>
        </div>
        <div className="ml-2 w-[54px] text-center text-[11px] leading-[18px] whitespace-nowrap">
          <div>10:39 AM</div>
          <div>6/21/2025</div>
        </div>
        <button aria-label="Notifications" className="mr-[25px] ml-[18px]">
          <svg viewBox="0 0 16 16" className="size-4" fill="none" stroke="#fff" strokeWidth="1.100"><path d="M.5 1.500h15v11H11L8 15.500l-3-3H.5z" /></svg>
        </button>
      </div>
    </div>
  );
}

const Watermark = () => (
  <div className="absolute right-[49px] bottom-[48px] flex items-center gap-1 font-[Roboto,sans-serif] text-[32px] leading-[62px] font-light text-[#808080]">
    <span>ANY</span>
    <svg viewBox="0 0 56 62" className="h-[62px] w-14" fill="none" stroke="#808080" strokeWidth="3.500" strokeLinejoin="round" strokeLinecap="round">
      <path d="M12 43V4q0-3 3-1.500L51 23q3 3 0 4.500l-4-.5L17 10" />
      <path d="M7 8H4Q2 9 2 12v38q0 4 4 2l34-19" />
      <path d="M12 57q1 4 5 2l35-22q2-2 0-4L17 14" />
    </svg>
    <span>RUN</span>
  </div>
);

function App() {
  return (
    <div className="relative flex h-screen flex-col overflow-hidden font-['Open_Sans','Noto_Sans_CJK_SC',sans-serif]">
      <BrowserTitleBar />
      <BrowserToolbar />
      <WebPage />
      <DownloadsFlyout />
      <Explorer />
      <Watermark />
      <Taskbar />
      <ContextMenu />
    </div>
  );
}

export default App;
